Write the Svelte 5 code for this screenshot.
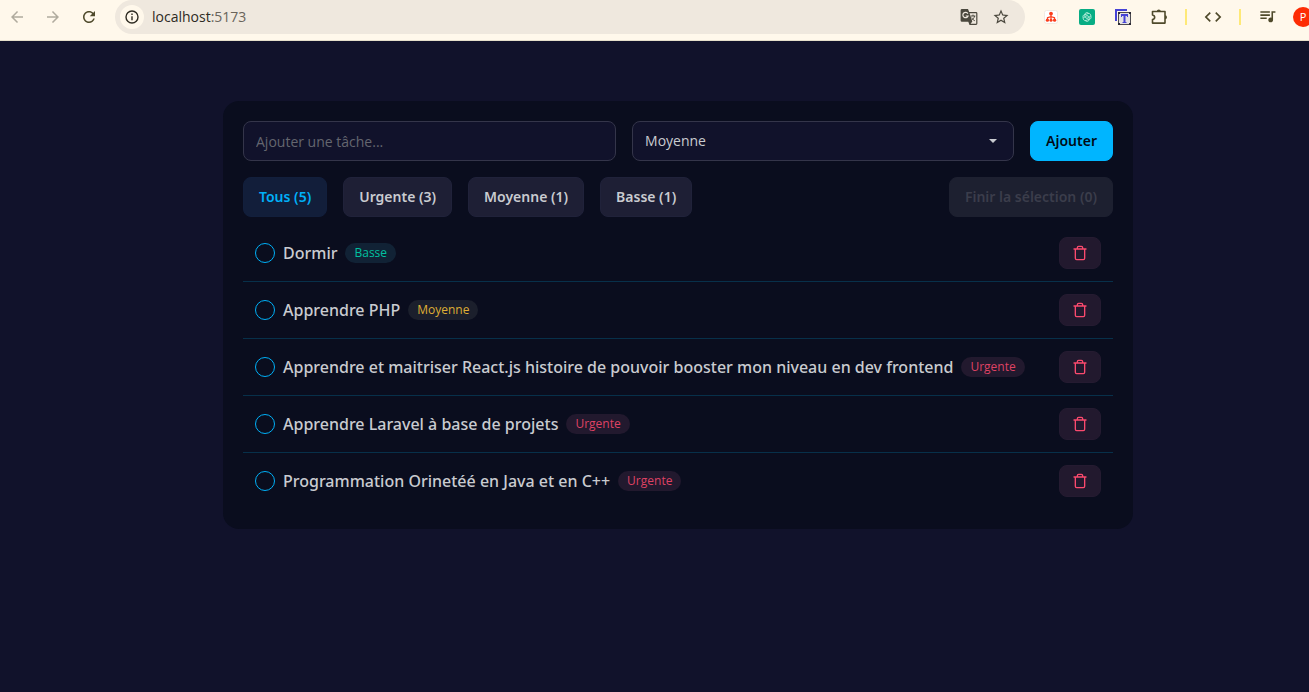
<script>
  let draft = $state('');
  let priority = $state('Moyenne');
  let filter = $state('Tous');
  let selected = $state([]);
  let todos = $state([
    { id: 5, text: 'Dormir', priority: 'Basse' },
    { id: 4, text: 'Apprendre PHP', priority: 'Moyenne' },
    { id: 3, text: 'Apprendre et maitriser React.js histoire de pouvoir booster mon niveau en dev frontend', priority: 'Urgente' },
    { id: 2, text: 'Apprendre Laravel à base de projets', priority: 'Urgente' },
    { id: 1, text: 'Programmation Orinetéé en Java et en C++', priority: 'Urgente' }
  ]);

  const filters = ['Tous', 'Urgente', 'Moyenne', 'Basse'];
  const count = (f) => (f === 'Tous' ? todos.length : todos.filter((t) => t.priority === f).length);
  let visible = $derived(filter === 'Tous' ? todos : todos.filter((t) => t.priority === filter));

  function add(event) {
    event.preventDefault();
    if (!draft.trim()) return;
    todos = [{ id: Date.now(), text: draft.trim(), priority }, ...todos];
    draft = '';
  }
  function remove(id) {
    todos = todos.filter((t) => t.id !== id);
    selected = selected.filter((s) => s !== id);
  }
  function finish() {
    todos = todos.filter((t) => !selected.includes(t.id));
    selected = [];
  }
</script>

<header class="toolbar">
  <nav class="nav">
    <button class="tool faded" aria-label="Back">
      <svg viewBox="0 0 24 24" width="18" height="18"><path d="M20 11H7.83l5.59-5.59L12 4l-8 8 8 8 1.41-1.41L7.83 13H20z" /></svg>
    </button>
    <button class="tool faded" aria-label="Forward">
      <svg viewBox="0 0 24 24" width="18" height="18"><path d="M4 11h12.17l-5.59-5.59L12 4l8 8-8 8-1.41-1.41L16.17 13H4z" /></svg>
    </button>
    <button class="tool" aria-label="Reload">
      <svg viewBox="0 0 24 24" width="18" height="18"><path d="M17.65 6.35C16.2 4.9 14.21 4 12 4c-4.42 0-7.99 3.58-7.99 8s3.57 8 7.99 8c3.73 0 6.84-2.55 7.73-6h-2.08c-.82 2.33-3.04 4-5.65 4-3.31 0-6-2.69-6-6s2.69-6 6-6c1.66 0 3.14.69 4.22 1.78L13 11h7V4z" /></svg>
    </button>
  </nav>

  <div class="address">
    <button class="site" aria-label="Site information">
      <svg viewBox="0 0 16 16" width="16" height="16"><circle cx="8" cy="8" r="6" fill="none" stroke="currentColor" stroke-width="1.4" /><path d="M7.3 7.2h1.4v4H7.3zM7.3 4.6h1.4V6H7.3z" /></svg>
    </button>
    <span class="url">localhost<span class="port">:5173</span></span>
    <button class="inpill" aria-label="Translate">
      <svg viewBox="0 0 20 20" width="20" height="20">
        <path d="M3 2h6l1.2 3H17a1.4 1.4 0 0 1 1.4 1.4v10.2A1.4 1.4 0 0 1 17 18h-6.5l-1.2-3.2H3a1.4 1.4 0 0 1-1.4-1.4v-10A1.4 1.4 0 0 1 3 2z" />
        <path d="M10.6 6.2h6.6v10.6h-5.6l1.7-2.2z" fill="#efe8de" />
        <path d="M8.9 6.6A2.7 2.7 0 1 0 9.1 9H6.7" fill="none" stroke="#efe8de" stroke-width="1.2" />
        <path d="M11.8 9h4.6M14 7.6V9M15.6 9c-.4 2-1.7 3.4-3.2 4.4M12.8 10.6c.6 1.3 1.5 2.4 3 3.2" fill="none" stroke="currentColor" stroke-width="1" />
      </svg>
    </button>
    <button class="inpill" aria-label="Bookmark">
      <svg viewBox="0 0 24 24" width="18" height="18"><path fill-rule="evenodd" d="M22 9.24l-7.19-.62L12 2 9.19 8.63 2 9.24l5.46 4.73L5.82 21 12 17.27 18.18 21l-1.63-7.03zM12 15.4l-3.76 2.27 1-4.28-3.32-2.88 4.38-.38L12 6.1l1.71 4.04 4.38.38-3.32 2.88 1 4.28z" /></svg>
    </button>
  </div>

  <div class="extensions">
    <button class="ext" aria-label="Sitemap">
      <svg viewBox="0 0 14 14" width="14" height="14">
        <rect x=".5" y=".5" width="13" height="13" rx="2" fill="#fff" stroke="#f1eae2" />
        <g fill="#fb3e1c"><circle cx="7" cy="3.6" r="1.9" /><circle cx="3.4" cy="10.2" r="1.6" /><circle cx="7" cy="10.2" r="1.5" /><circle cx="10.6" cy="10.2" r="1.6" /></g>
        <path d="M7 4v6M3.5 10V7.6L7 6.6l3.5 1V10" fill="none" stroke="#fb3e1c" stroke-width="1.2" />
      </svg>
    </button>
    <button class="ext" aria-label="Assistant">
      <svg viewBox="0 0 16 16" width="16" height="16">
        <rect width="16" height="16" rx="2" fill="#08ad84" />
        <g fill="none" stroke="#b9eedd" stroke-width=".9">
          <path d="M4.4 9.3c-1.2-2 .1-3.6 1.4-3.8M5.8 8.9V5.500c.4-2.200 2.700-2.500 3.900-1.200M5.800 5.800L9 4.500c2.200-.4 3.200 1.400 2.700 3" />
          <path d="M11.600 6.700c1.200 2-.1 3.600-1.400 3.800M10.200 7.100v3.400c-.4 2.200-2.700 2.500-3.900 1.200M10.200 10.200L7 11.500c-2.200.4-3.200-1.400-2.700-3" />
          <path d="M6.700 7.200L8 6.500l1.300.7v1.600L8 9.500l-1.300-.7z" />
        </g>
      </svg>
    </button>
    <button class="ext" aria-label="Text tool">
      <svg viewBox="0 0 18 18" width="18" height="18">
        <path d="M1 1h12v2H3v10H1z" fill="#4744d5" />
        <path d="M4.5 4.5h12v12h-12z" fill="#e5e2e3" stroke="#4c4a50" />
        <path d="M7 6h7v3h-1V8h-1.500v6h1v1h-4v-1h1V8H8v1H7z" fill="#4744d5" />
        <path d="M4 4h2v2H4zM15 4h2v2h-2zM4 15h2v2H4zM15 15h2v2h-2z" fill="#2c2a35" />
      </svg>
    </button>
    <button class="ext" aria-label="Extensions">
      <svg viewBox="0 0 18 18" width="18" height="18"><path d="M2.5 3.5H15v11.6H2.5v-3.5c2.9-.6 2.9-4 0-4.6z" fill="none" stroke="currentColor" stroke-width="1.6" stroke-linejoin="round" /><path d="M6.8 3.5a2 2 0 0 1 4 0zM15 7.3a2 2 0 0 1 0 4z" /></svg>
    </button>
    <span class="rule"></span>
    <button class="ext" aria-label="Developer tools">
      <svg viewBox="0 0 24 24" width="20" height="20"><path d="M9.4 16.6L4.8 12l4.6-4.6L8 6l-6 6 6 6zm5.2 0l4.6-4.6-4.6-4.6L16 6l6 6-6 6z" /></svg>
    </button>
    <span class="rule"></span>
    <button class="ext" aria-label="Media">
      <svg viewBox="0 0 24 24" width="19" height="19"><path d="M15 4H3v2h12zm0 4H3v2h12zM3 14h8v-2H3zM17 4v8.18c-.31-.11-.65-.18-1-.18-1.66 0-3 1.34-3 3s1.34 3 3 3 3-1.34 3-3V6h3V4z" /></svg>
    </button>
    <button class="avatar" aria-label="Profile">P</button>
  </div>
</header>

<main>
  <section class="card">
    <form class="add" onsubmit={add}>
      <input class="field" type="text" placeholder="Ajouter une tâche..." aria-label="Ajouter une tâche" bind:value={draft} />
      <div class="picker">
        <select class="field" aria-label="Priorité" bind:value={priority}>
          <option>Urgente</option>
          <option>Moyenne</option>
          <option>Basse</option>
        </select>
        <svg class="caret" viewBox="0 0 8 4" width="8" height="4"><path d="M0 0h8L4 4z" /></svg>
      </div>
      <button class="btn primary" type="submit">Ajouter</button>
    </form>

    <div class="filters">
      {#each filters as f}
        <button class="btn" class:active={filter === f} onclick={() => (filter = f)}>{f} ({count(f)})</button>
      {/each}
      <button class="btn finish" disabled={selected.length === 0} onclick={finish}>Finir la sélection ({selected.length})</button>
    </div>

    <ul class="list">
      {#each visible as todo (todo.id)}
        <li>
          <label>
            <input class="check" type="checkbox" value={todo.id} bind:group={selected} />
            <span class="title">{todo.text}</span>
          </label>
          <span class="badge {todo.priority.toLowerCase()}">{todo.priority}</span>
          <button class="delete" aria-label="Supprimer" onclick={() => remove(todo.id)}>
            <svg viewBox="0 0 24 24" width="16" height="16"><path d="M3 6h18M19 6v14c0 1-1 2-2 2H7c-1 0-2-1-2-2V6M8 6V4c0-1 1-2 2-2h4c1 0 2 1 2 2v2" fill="none" stroke="currentColor" stroke-width="2" stroke-linecap="round" stroke-linejoin="round" /></svg>
          </button>
        </li>
      {/each}
    </ul>
  </section>
</main>

<style>
  :global(body) {
    margin: 0;
    background: #11122b;
    color: #c9cbd0;
    font-family: 'Open Sans', 'Noto Sans', sans-serif;
    font-size: 14px;
    line-height: 20px;
  }
  button,
  input,
  select {
    box-sizing: border-box;
    margin: 0;
    font: inherit;
    color: inherit;
  }
  button {
    padding: 0;
    border: 0;
    background: none;
    cursor: pointer;
    white-space: nowrap;
  }
  svg {
    display: block;
    fill: currentColor;
  }

  .toolbar {
    display: flex;
    height: 40px;
    align-items: flex-start;
    overflow: hidden;
    border-bottom: 1px solid #e6dfcb;
    background: #fff8eb;
    color: #4f4a2b;
  }
  .nav {
    display: flex;
    gap: 2px;
    margin-right: 9px;
  }
  .tool,
  .ext {
    display: grid;
    place-items: center;
    width: 34px;
    height: 34px;
  }
  .ext {
    width: 36px;
  }
  .faded {
    color: #b0ab9e;
  }
  .address {
    display: flex;
    flex: 1;
    align-items: center;
    min-width: 0;
    height: 34px;
    padding: 0 14px 0 5px;
    box-sizing: border-box;
    border-radius: 17px;
    background: #efe8de;
    gap: 12px;
    color: #4b483e;
  }
  .site {
    display: grid;
    place-items: center;
    width: 24px;
    height: 24px;
    margin-right: -4px;
    border-radius: 50%;
    background: #fff8eb;
    color: #2f2c22;
  }
  .url {
    flex: 1;
    color: #2d2a24;
  }
  .port {
    color: #69645a;
  }
  .inpill {
    display: grid;
    place-items: center;
    width: 20px;
    height: 20px;
  }
  .extensions {
    display: flex;
    align-items: center;
    height: 34px;
    margin-left: 8px;
  }
  .rule {
    width: 2px;
    height: 16px;
    margin: 0 8px;
    background: #fee977;
  }
  .avatar {
    width: 20px;
    height: 20px;
    margin: 0 -4px 0 8px;
    border-radius: 50%;
    background: #fd2c04;
    color: #fff;
    font-size: 11px;
  }

  main {
    display: grid;
    grid-template-columns: 223fr 910fr 176fr;
    padding: 60px 0;
  }
  .card {
    grid-column: 2;
    padding: 20px;
    border-radius: 16px;
    background: #0a0d1e;
  }
  .add {
    display: grid;
    grid-template-columns: 373fr 382fr auto;
    gap: 16px;
  }
  .filters {
    display: flex;
    gap: 16px;
    margin: 16px 0 8px;
  }
  .field {
    width: 100%;
    height: 40px;
    padding: 0 12px;
    border: 1px solid #34354a;
    border-radius: 8px;
    background: #11122b;
  }
  .field::placeholder {
    color: #64666f;
    opacity: 1;
  }
  .picker {
    display: grid;
    align-items: center;
  }
  .picker > * {
    grid-area: 1 / 1;
  }
  select.field {
    appearance: none;
  }
  .caret {
    justify-self: end;
    margin-right: 17px;
    pointer-events: none;
  }
  .btn {
    height: 40px;
    padding: 0 15px;
    border: 1px solid #20223a;
    border-radius: 8px;
    background: #1e1f35;
    font-family: 'Noto Sans', sans-serif;
    font-weight: 600;
  }
  .primary {
    border-color: #00b5ff;
    background: #00b5ff;
    color: #000b16;
  }
  .active {
    border-color: #121f3c;
    background: #121e3a;
    color: #00b0f8;
  }
  .finish {
    margin-left: auto;
  }
  .btn:disabled {
    border-color: #1d2030;
    background: #1d2030;
    color: #3b3d4b;
    cursor: default;
  }

  .list {
    margin: 0;
    padding: 0;
    list-style: none;
  }
  li {
    display: flex;
    align-items: center;
    gap: 8px;
    padding: 12px;
  }
  li + li {
    border-top: 1px solid #07304a;
  }
  label {
    display: flex;
    align-items: center;
    gap: 8px;
    min-width: 0;
  }
  .check {
    flex: none;
    width: 20px;
    height: 20px;
    appearance: none;
    border: 1px solid #00b0f8;
    border-radius: 50%;
  }
  .check:checked {
    background: #00b0f8;
    box-shadow: inset 0 0 0 4px #0a0d1e;
  }
  .title {
    font-family: 'Noto Sans', sans-serif;
    font-size: 16px;
    font-weight: 500;
    line-height: 24px;
  }
  .badge {
    padding: 0 9px;
    border-radius: 10px;
    font-size: 12px;
  }
  .basse {
    background: #112235;
    color: #00c0a0;
  }
  .moyenne {
    background: #1b1f2c;
    color: #dfae35;
  }
  .urgente {
    background: #22192e;
    color: #df4264;
  }
  .delete {
    display: grid;
    flex: none;
    place-items: center;
    width: 42px;
    height: 32px;
    margin-left: auto;
    border: 1px solid #251b31;
    border-radius: 8px;
    background: #22192e;
    color: #fb4a6e;
  }
</style>
